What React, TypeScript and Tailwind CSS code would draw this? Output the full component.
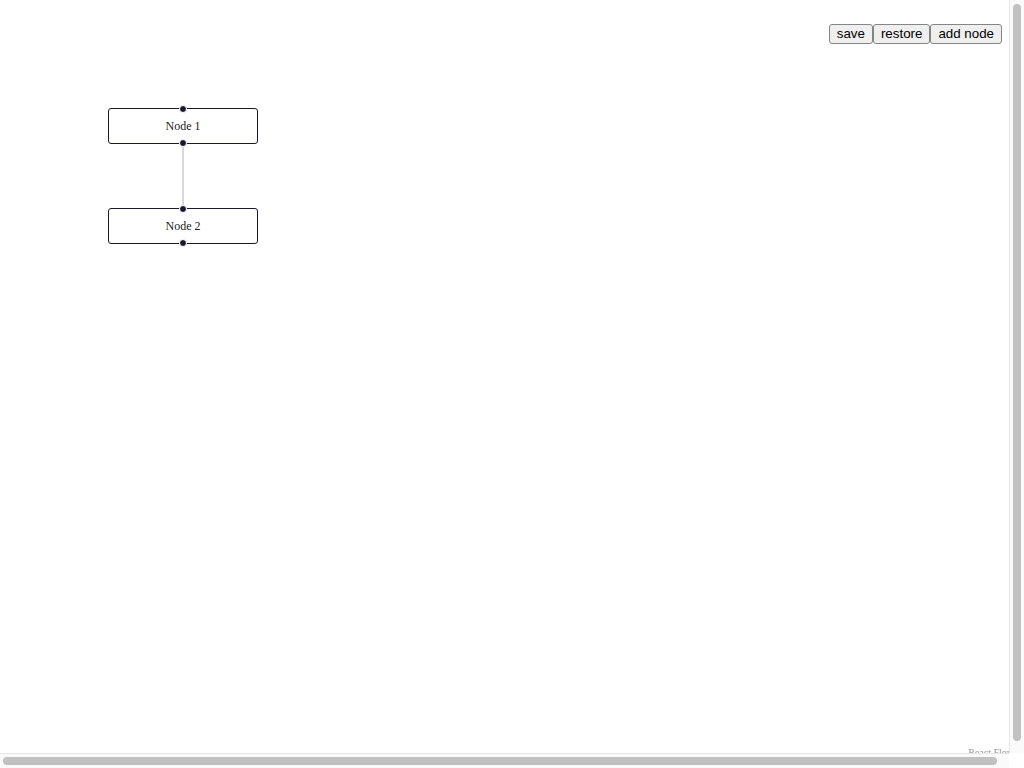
import React from "react";

type FlowNode = { id: string; label: string; x: number; y: number };

const nodes: FlowNode[] = [
  { id: "1", label: "Node 1", x: 108, y: 108 },
  { id: "2", label: "Node 2", x: 108, y: 208 },
];

function Handle({ pos }: { pos: "top" | "bottom" }) {
  return (
    <div
      className={
        pos === "top"
          ? "absolute left-1/2 top-0 h-[8px] w-[8px] -translate-x-1/2 -translate-y-1/2 rounded-full border border-white bg-[#1a192b]"
          : "absolute left-1/2 bottom-0 h-[8px] w-[8px] -translate-x-1/2 translate-y-1/2 rounded-full border border-white bg-[#1a192b]"
      }
    />
  );
}

function Node({ node }: { node: FlowNode }) {
  return (
    <div
      className="absolute flex h-[36px] w-[150px] items-center justify-center rounded-[3px] border border-[#1a192b] bg-white text-[12px] text-[#222]"
      style={{ left: node.x, top: node.y, fontFamily: '"Liberation Serif", serif' }}
    >
      <Handle pos="top" />
      {node.label}
      <Handle pos="bottom" />
    </div>
  );
}

const btn =
  "m-0 h-[20px] rounded-[3px] border border-[#858585] bg-[#efefef] px-[7px] text-[13.33px] leading-none text-black";

export default function App() {
  return (
    <div className="relative h-screen w-screen overflow-hidden bg-white" style={{ fontFamily: '"Liberation Sans", Arial, sans-serif' }}>
      {/* edge */}
      <svg className="absolute left-0 top-0 h-full w-full pointer-events-none">
        <path d="M183 143 L183 208" stroke="#b1b1b7" strokeWidth={1} fill="none" />
      </svg>

      {nodes.map((n) => (
        <Node key={n.id} node={n} />
      ))}

      {/* panel */}
      <div className="absolute right-[22px] top-[24px] flex">
        <button className={btn}>save</button>
        <button className={btn}>restore</button>
        <button className={btn}>add node</button>
      </div>

      <div
        className="absolute bottom-[7px] right-[7px] bg-white/50 px-[3px] py-[2px] text-[10px] leading-[12px] text-[#999]"
        style={{ fontFamily: '"Liberation Serif", serif' }}
      >
        React Flow
      </div>

      {/* page scrollbars (overlay) */}
      <div className="absolute right-0 top-0 h-[753px] w-[15px] border-l border-[#e6e6e6] bg-[#fafafa]">
        <div className="ml-[3px] mt-[4px] h-[737px] w-[8px] rounded-full bg-[#c1c1c1]" />
      </div>
      <div className="absolute bottom-0 left-0 h-[15px] w-[1009px] border-t border-[#e6e6e6] bg-[#fafafa]">
        <div className="ml-[3px] mt-[3px] h-[8px] w-[994px] rounded-full bg-[#c1c1c1]" />
      </div>
      <div className="absolute bottom-0 right-0 h-[15px] w-[15px] bg-white" />
    </div>
  );
}
